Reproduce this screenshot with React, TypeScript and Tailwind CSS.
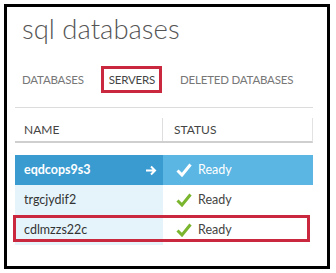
import React from 'react';

type Row = { name: string; selected?: boolean; marked?: boolean };

const rows: Row[] = [
  { name: 'eqdcops9s3', selected: true },
  { name: 'trgcjydif2' },
  { name: 'cdlmzzs22c', marked: true },
];

const Check: React.FC<{ color: string }> = ({ color }) => (
  <svg width="16" height="14" viewBox="0 0 16 14" className="shrink-0">
    <path d="M1.5 7.5 L6 12 L14.5 1.5" fill="none" stroke={color} strokeWidth="3" strokeLinejoin="miter" />
  </svg>
);

const ServerRow: React.FC<{ row: Row }> = ({ row }) => (
  <div className="relative flex h-[30px]">
    <div
      className={`flex w-[148px] items-center justify-between pl-[9px] pr-[6px] ${
        row.selected ? 'bg-[#3a9bd1] font-bold text-white' : 'bg-[#e5f3fb] text-[#333]'
      }`}
    >
      <span>{row.name}</span>
      {row.selected && (
        <svg width="12" height="11" viewBox="0 0 12 11">
          <path d="M1 5.5 H10 M6 1.5 L10 5.5 L6 9.5" fill="none" stroke="#fff" strokeWidth="2" />
        </svg>
      )}
    </div>
    <div
      className={`flex flex-1 items-center gap-[6px] pl-[13px] ${
        row.selected ? 'bg-[#5bb6e3] text-white' : 'bg-white text-[#444]'
      }`}
    >
      <Check color={row.selected ? '#ffffff' : '#7ab52e'} />
      <span>Ready</span>
    </div>
    {row.marked && (
      <div className="pointer-events-none absolute left-[-2px] right-[3px] top-0 bottom-[3px] border-[3px] border-[#c9283e]" />
    )}
  </div>
);

export default function App() {
  return (
    <div className="h-[273px] w-[336px] bg-white p-[4px]" style={{ fontFamily: 'Lato, "Liberation Sans", sans-serif' }}>
      <div className="h-[265px] w-[326px] border-[3px] border-black bg-white pt-[5px]">
        <h1 className="pl-[15px] text-[27.5px] font-light leading-[34px] text-[#555]">sql databases</h1>

        <div className="mt-[20px] flex items-center pl-[15px] text-[11.5px] tracking-[-0.2px] uppercase text-[#777]">
          <span className="leading-[27px]">Databases</span>
          <span className="ml-[17px] flex h-[27px] items-center border-[3px] border-[#c9283e] pl-[5px] pr-[4px] text-[#444]">
            Servers
          </span>
          <span className="ml-[18px] leading-[27px]">Deleted Databases</span>
        </div>

        <div className="ml-[8px] mt-[14px] w-[298px] text-[12.5px]">
          <div className="h-px bg-[#dcdcdc]" />

          <div className="mt-[10px] flex h-[25px] border-r border-b-2 border-r-[#e2e2e2] border-b-[#cfcfcf] text-[12px] uppercase text-[#444]">
            <div className="flex w-[148px] items-center border-r border-[#dedede] pl-[9px]">Name</div>
            <div className="flex flex-1 items-center pl-[11px]">Status</div>
          </div>

          <div className="mt-[12px]">
            {rows.map((r) => (
              <ServerRow key={r.name} row={r} />
            ))}
          </div>
        </div>
      </div>
    </div>
  );
}
